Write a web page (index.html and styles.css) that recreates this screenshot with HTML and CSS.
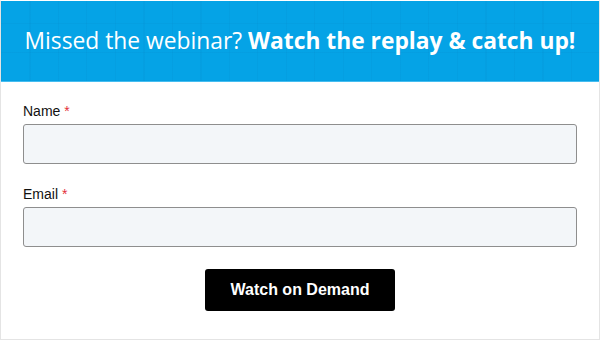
FILE: index.html
```html
<!DOCTYPE html>
<html>
<head>
<meta charset="utf-8">
<link rel="stylesheet" href="styles.css">
</head>
<body>
<div class="card">
  <div class="banner">
    <h1 class="banner-title">Missed the webinar? <strong>Watch the replay &amp; catch up!</strong></h1>
  </div>
  <form class="form">
    <div class="field">
      <label class="label">Name <span class="req">*</span></label>
      <input class="input" type="text">
    </div>
    <div class="field">
      <label class="label">Email <span class="req">*</span></label>
      <input class="input" type="email">
    </div>
    <div class="actions">
      <button class="btn" type="button">Watch on Demand</button>
    </div>
  </form>
</div>
</body>
</html>
```
FILE: styles.css
```css
html, body {
  margin: 0;
  padding: 0;
  background: #ffffff;
}
.card {
  box-sizing: border-box;
  width: 600px;
  height: 340px;
  border: 1px solid #e4e4e4;
  border-top-color: #ffffff;
  background: #ffffff;
}
.banner {
  height: 80px;
  border-bottom: 1px solid #45bdf0;
  background-color: #05a3e6;
  background-image:
    repeating-linear-gradient(90deg, rgba(0,80,140,0.05) 0 1px, transparent 1px 28.5px),
    repeating-linear-gradient(0deg, rgba(0,80,140,0.05) 0 1px, transparent 1px 28.5px);
  display: flex;
  align-items: center;
  justify-content: center;
}
.banner-title {
  margin: 0 0 2px 0;
  font-family: "Open Sans", sans-serif;
  font-weight: 400;
  font-size: 22.8px;
  letter-spacing: 0;
  color: #ffffff;
  white-space: nowrap;
}
.banner-title strong {
  font-weight: 700;
}
.form {
  padding: 21px 22px 0 22px;
  font-family: "Liberation Sans", Arial, sans-serif;
}
.field {
  display: flex;
  flex-direction: column;
  margin-bottom: 22px;
}
.label {
  font-size: 14px;
  line-height: 16px;
  color: #111111;
  margin-bottom: 5px;
}
.req {
  color: #e3303a;
}
.input {
  box-sizing: border-box;
  height: 40px;
  width: 100%;
  margin: 0;
  border: 1px solid #8e8e8e;
  border-radius: 3px;
  background: #f3f6f9;
}
.actions {
  display: flex;
  justify-content: center;
}
.btn {
  width: 190px;
  height: 42px;
  border: none;
  border-radius: 3px;
  background: #000000;
  color: #ffffff;
  font-family: "Liberation Sans", Arial, sans-serif;
  font-weight: 700;
  font-size: 16px;
}
```
